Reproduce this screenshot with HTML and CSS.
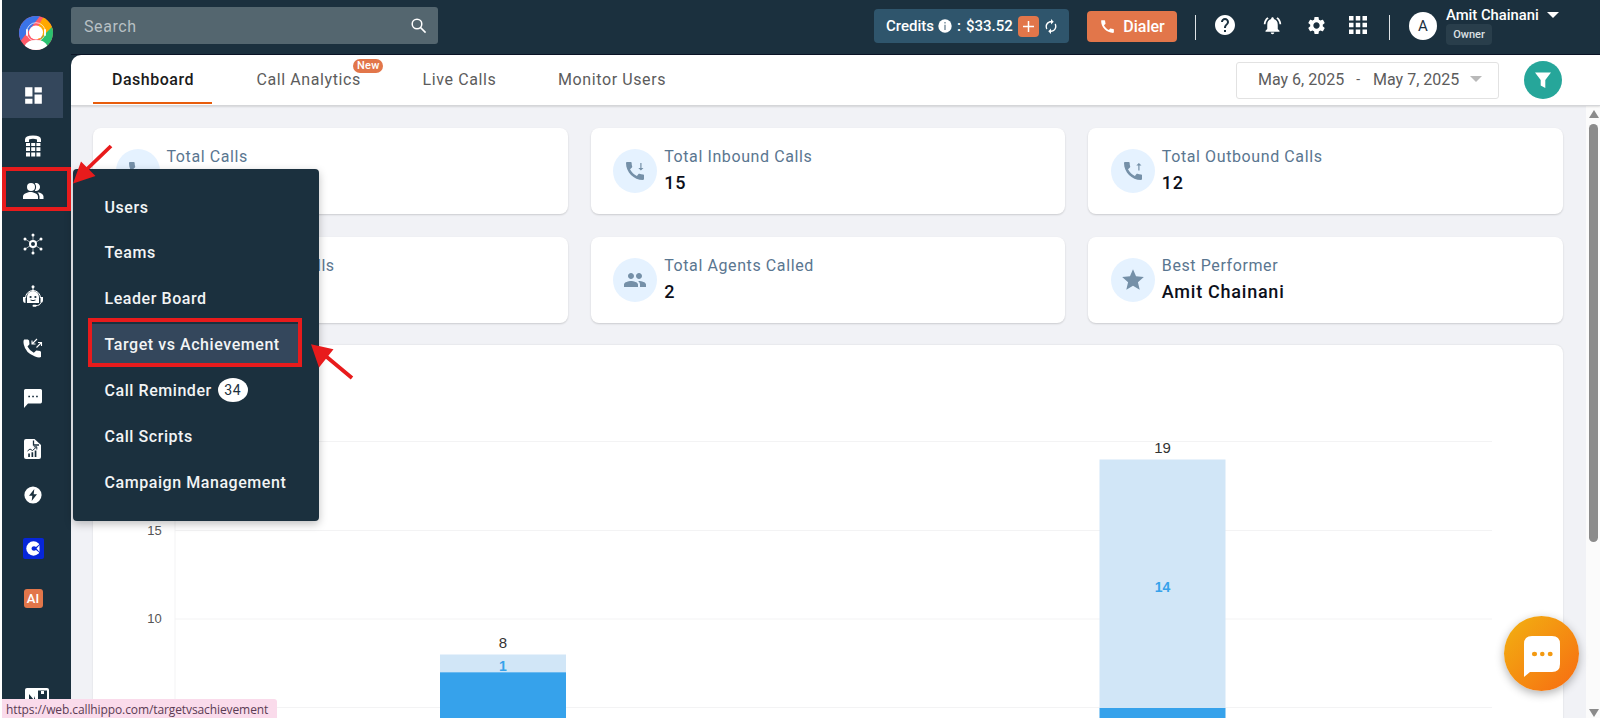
FILE: index.html
```html
<!DOCTYPE html>
<html lang="en">
<head>
    <meta charset="UTF-8">
    <meta name="viewport" content="width=device-width, initial-scale=1.0">
    <title>Dashboard</title>
    <link rel="stylesheet" href="styles.css">
</head>
<body>
    <nav class="sidebar">
        <div class="logo">
            <svg width="34" height="34" viewBox="0 0 34 34">
                <clipPath id="logoClip"><circle cx="17" cy="17" r="17"/></clipPath>
                <g clip-path="url(#logoClip)">
                    <rect width="34" height="34" fill="#ff5a68"/>
                    <path d="M0 0h21L0 27z" fill="#3b74e8"/>
                    <path d="M25 0L34 10V14L25 22L17 14z" fill="#ffa800"/>
                    <path d="M34 10V34H22V22z" fill="#2ac16f"/>
                    <path d="M5 34c0-7 5-10 12-10s12 3 12 10z" fill="#fff"/>
                </g>
                <circle cx="17" cy="16" r="9.300" fill="none" stroke="#fff" stroke-width=".7"/>
                <circle cx="17" cy="16.500" r="7" fill="#fff"/>
                <path d="M8 14v5M26 14v5" stroke="#fff" stroke-width="1.800" stroke-linecap="round"/>
                <path d="M25 20q-2 3-6 3" fill="none" stroke="#ffa800" stroke-width=".8"/>
            </svg>
        </div>
        <a class="nav-item active">
            <svg width="25" height="25" viewBox="0 0 24 24"><path d="M4 4h7v9H4zM13 4h7v5h-7zM4 15h7v5H4zM13 11h7v9h-7z"/></svg>
        </a>
        <a class="nav-item">
            <svg width="18" height="22" viewBox="0 0 18 22"><path d="M1 7V4.500Q1 0.500 9 .5T17 4.500V7H13V4.500Q9 2.800 5 4.500V7z"/><path d="M2 8h4v3H2zM7.200 8h4v3h-4zM12.400 8h4v3h-4zM2 12.200h4v3.800H2zM7.200 12.200h4v3.800h-4zM12.400 12.200h4v3.800h-4zM2 17.500h4v4H2zM7.200 17.500h4v4h-4zM12.400 17.500h4v4h-4z"/></svg>
        </a>
        <a class="nav-item">
            <svg width="21" height="16" viewBox="0 0 21 16"><circle cx="8" cy="4" r="4"/><path d="M0 16v-2.500C0 10.500 5 9 7.500 9s7.500 1.500 7.500 4.500V16zM11.800.2A4 4 0 1 1 11.800 7.800Q14.500 4 11.800.2zM14.500 9.300c3.500.5 6 1.900 6 4.200V16h-4v-2.500q0-2.300-2-4.200z"/></svg>
        </a>
        <a class="nav-item">
            <svg width="22" height="22" viewBox="0 0 22 22"><g stroke="#fff" stroke-width=".6"><path d="M11 2v18M3 6l16 10M3 16l16-10"/></g><circle cx="11" cy="11" r="3" fill="#1b303e" stroke="#fff" stroke-width="2"/><circle cx="11" cy="2" r="1.500"/><circle cx="11" cy="20" r="1.500"/><circle cx="3" cy="6" r="1.500"/><circle cx="19" cy="6" r="1.500"/><circle cx="3" cy="16" r="1.500"/><circle cx="19" cy="16" r="1.500"/></svg>
        </a>
        <a class="nav-item">
            <svg width="20" height="22" viewBox="0 0 20 22"><circle cx="10" cy="1.800" r="1.500"/><path d="M9.500 2h1v4h-1z"/><path d="M4 18v-6a6 6 0 0 1 12 0v6z"/><path d="M2.500 13a7.500 7.500 0 0 1 15 0" fill="none" stroke="#fff"/><path d="M0 12h2.500v6Q0 18 0 15zM20 12h-2.500v6Q20 18 20 15z"/><path d="M17.500 18q0 2.500-5.500 2.700" fill="none" stroke="#fff"/><rect x="9.500" y="19.700" width="4" height="2" rx="1"/><circle cx="7.600" cy="12" r="1.100" fill="#1b303e"/><circle cx="12.400" cy="12" r="1.100" fill="#1b303e"/><path d="M7.500 15q2.500 1.300 5 0" fill="none" stroke="#1b303e"/></svg>
        </a>
        <a class="nav-item">
            <svg width="20" height="20" viewBox="0 0 20 20"><path d="M1.200 1.500h3.600l1.300.9.400 3.800-2 2.300q2 4 6.300 6.200l2.500-2.300 3.900.6.800 1v5Q16 20 12 18.500 2.500 15 .8 6.500 0 2.500 1.200 1.500z"/><path d="M14 1L9 6M9 2.500V6h3.500M13.500 9.500l5-5M15 4.500h3.500V8" fill="none" stroke="#fff" stroke-width="1.100"/></svg>
        </a>
        <a class="nav-item">
            <svg width="18" height="19" viewBox="0 0 18 19"><path d="M1.500 0h15Q18 0 18 1.500v11Q18 14.500 16.500 14.500H4L0 19V1.500Q0 0 1.500 0z"/><path d="M4.300 6.800h1.700v1.500H4.300zM8.200 6.800h1.700v1.500H8.200zM12.100 6.800h1.700v1.500h-1.700z" fill="#1b303e"/></svg>
        </a>
        <a class="nav-item report">
            <svg width="17" height="20" viewBox="0 0 17 20"><path d="M2 0h8.500L17 6v12q0 2-2 2H2q-2 0-2-2V2Q0 0 2 0z"/><path d="M9.500 1.500V6H15" fill="none" stroke="#1b303e" stroke-width="1.300"/><path d="M4.200 14.500h1.700v3.500H4.200zM7.500 13.200h1.700V18H7.500zM10.700 11.500h1.700V18h-1.700z" fill="#1b303e"/><path d="M3.500 12l2.500-2 2.500 1.500L12.500 8M9.800 7.800h3v2.700" fill="none" stroke="#1b303e" stroke-width="1"/></svg>
        </a>
        <a class="nav-item report">
            <svg width="18" height="18" viewBox="0 0 18 18"><circle cx="9" cy="9" r="8.600"/><path d="M10.300 3L5 9.800h3.300L7.700 15 13 8.200H9.700z" fill="#1b303e"/></svg>
        </a>
        <a class="nav-item">
            <svg width="21" height="21" viewBox="0 0 21 21"><rect width="21" height="21" rx="2" fill="#0726d9"/><circle cx="10.500" cy="10.500" r="7.200"/><path d="M18.500 4.500L13 9Q11 7.500 9 9 8 10.500 9 12q2 1.500 4 0l5.500 4.500z" fill="#0726d9"/><path d="M16.500 7l-3 3.500 3 3.500z"/></svg>
        </a>
        <a class="nav-item"><span class="ai">AI</span></a>
        <a class="nav-item wallet">
            <svg width="24" height="20" viewBox="0 0 24 20"><rect width="24" height="20" rx="2"/><path d="M13 2.500h9V18h-9zM4 6l5 6V8l2 5H4z" fill="#1b303e"/><path d="M16 3h3v3h-3z"/></svg>
        </a>
    </nav>

    <div class="page">
        <header class="topbar">
            <div class="search">
                <span>Search</span>
                <svg width="16" height="16" viewBox="0 0 16 16" fill="none" stroke="#fff" stroke-width="1.500"><circle cx="6" cy="6" r="4.800"/><path d="M9.600 9.600l5 5"/></svg>
            </div>
            <div class="credits">
                <span>Credits</span>
                <svg width="14" height="14" viewBox="0 0 14 14"><circle cx="7" cy="7" r="6.700" fill="#fff"/><path d="M6.200 3h1.600v1.500H6.200zM6.200 5.700h1.600V11H6.200z" fill="#8598a5"/></svg>
                <span>:</span>
                <span class="amount">$33.52</span>
                <span class="plus"><svg width="11" height="11" viewBox="0 0 11 11" stroke="#fff" stroke-width="1.500"><path d="M5.500 0v11M0 5.500h11"/></svg></span>
                <svg class="refresh" width="12" height="15" viewBox="4 1 16 22" fill="#fff"><path d="M12 6v3l4-4-4-4v3c-4.420 0-8 3.580-8 8 0 1.570.460 3.030 1.240 4.260L6.700 14.800c-.45-.83-.7-1.790-.7-2.800 0-3.310 2.690-6 6-6zm6.760 1.740L17.300 9.200c.44.840.7 1.790.7 2.800 0 3.310-2.690 6-6 6v-3l-4 4 4 4v-3c4.420 0 8-3.580 8-8 0-1.570-.46-3.030-1.240-4.260z"/></svg>
            </div>
            <button class="dialer">
                <svg width="17" height="17" viewBox="0 0 24 24" fill="#fff"><path d="M20.010 15.380c-1.230 0-2.420-.2-3.530-.56-.35-.12-.74-.03-1.010.24l-1.570 1.970c-2.830-1.350-5.480-3.900-6.890-6.830l1.950-1.660c.27-.28.350-.67.240-1.020-.37-1.110-.56-2.300-.56-3.530 0-.54-.45-.99-.99-.99H4.190C3.650 3 3 3.240 3 3.990 3 13.280 10.730 21 20.010 21c.71 0 .99-.63.990-1.180v-3.450c0-.54-.45-.99-.99-.99z"/></svg>
                Dialer
            </button>
            <i class="divider"></i>
            <div class="tools">
                <svg width="24" height="24" viewBox="0 0 24 24"><path d="M12 2C6.480 2 2 6.480 2 12s4.480 10 10 10 10-4.480 10-10S17.520 2 12 2zm1 17h-2v-2h2v2zm2.070-7.750l-.9.920C13.450 12.900 13 13.500 13 15h-2v-.5c0-1.100.450-2.100 1.170-2.830l1.240-1.260c.37-.36.590-.86.590-1.410 0-1.100-.9-2-2-2s-2 .9-2 2H8c0-2.210 1.790-4 4-4s4 1.790 4 4c0 .88-.36 1.680-.93 2.250z"/></svg>
                <svg width="21" height="21" viewBox="0 0 24 24"><path d="M7.580 4.080L6.150 2.650C3.750 4.480 2.170 7.300 2.030 10.500h2c.15-2.650 1.510-4.970 3.550-6.420zm12.390 6.420h2c-.15-3.200-1.730-6.020-4.120-7.850l-1.420 1.430c2.020 1.450 3.390 3.770 3.540 6.420zM18 11c0-3.070-1.640-5.640-4.500-6.320V4c0-.83-.67-1.500-1.500-1.500s-1.500.67-1.500 1.500v.68C7.630 5.360 6 7.920 6 11v5l-2 2v1h16v-1l-2-2v-5zm-6 11c1.100 0 2-.8 2-2h-4c0 1.200.9 2 2 2z"/></svg>
                <svg width="21" height="21" viewBox="0 0 24 24"><path d="M19.140 12.940c.04-.3.060-.61.060-.94 0-.32-.02-.64-.07-.94l2.030-1.580c.18-.14.230-.41.120-.61l-1.920-3.320c-.12-.22-.37-.29-.59-.22l-2.390.96c-.5-.38-1.030-.7-1.620-.94l-.36-2.540c-.04-.24-.24-.41-.48-.41h-3.840c-.24 0-.43.170-.47.410l-.36 2.540c-.59.240-1.130.570-1.620.94l-2.390-.96c-.22-.08-.47 0-.59.220L2.740 8.870c-.12.210-.08.470.12.610l2.030 1.580c-.05.300-.09.630-.09.940s.02.640.07.940l-2.030 1.580c-.18.140-.23.410-.12.610l1.920 3.320c.12.220.370.290.590.220l2.390-.96c.5.380 1.030.7 1.620.94l.36 2.540c.05.240.240.410.480.410h3.840c.24 0 .44-.17.470-.41l.36-2.540c.59-.24 1.130-.56 1.620-.94l2.390.96c.22.080.470 0 .59-.22l1.920-3.320c.12-.22.070-.47-.12-.61l-2.010-1.580zM12 15.600c-1.980 0-3.600-1.620-3.600-3.600s1.620-3.600 3.600-3.600 3.600 1.620 3.600 3.600-1.620 3.600-3.600 3.600z"/></svg>
                <svg width="18" height="18" viewBox="0 0 18 18"><path d="M0 0h4.500v4.500H0zM6.750 0h4.500v4.500h-4.500zM13.500 0H18v4.500h-4.500zM0 6.750h4.500v4.500H0zM6.750 6.750h4.500v4.500h-4.500zM13.500 6.750H18v4.500h-4.500zM0 13.500h4.500V18H0zM6.750 13.500h4.500V18h-4.500zM13.500 13.500H18V18h-4.500z"/></svg>
            </div>
            <i class="divider"></i>
            <div class="avatar">A</div>
            <div class="account">
                <div class="account-name">Amit Chainani <i class="caret"></i></div>
                <span class="role">Owner</span>
            </div>
        </header>

        <div class="tabs">
            <a class="tab selected">Dashboard</a>
            <a class="tab">Call Analytics<span class="new">New</span></a>
            <a class="tab">Live Calls</a>
            <a class="tab">Monitor Users</a>
            <div class="dates">
                <span>May 6, 2025</span>
                <span class="dash">-</span>
                <span>May 7, 2025</span>
                <i class="caret grey"></i>
            </div>
            <button class="filter">
                <svg width="16" height="16" viewBox="0 0 16 16"><path d="M0 .5h16L10.300 8v8L5.700 13.500V8z" fill="#fff"/></svg>
            </button>
        </div>

        <div class="body">
            <main class="content">
                <section class="cards">
                    <div class="card">
                        <span class="card-icon"><svg width="24" height="24" viewBox="0 0 24 24"><use href="#phone"/></svg></span>
                        <div><p class="label">Total Calls</p></div>
                    </div>
                    <div class="card">
                        <span class="card-icon"><svg width="24" height="24" viewBox="0 0 24 24">
                            <path id="phone" d="M20.010 15.380c-1.230 0-2.420-.2-3.530-.56-.35-.12-.74-.03-1.010.24l-1.570 1.970c-2.830-1.350-5.480-3.900-6.890-6.830l1.950-1.660c.27-.28.350-.67.240-1.020-.37-1.110-.56-2.300-.56-3.530 0-.54-.45-.99-.99-.99H4.190C3.650 3 3 3.240 3 3.990 3 13.280 10.730 21 20.010 21c.71 0 .99-.63.990-1.180v-3.450c0-.54-.45-.99-.99-.99z"/>
                            <path d="M17.300 4h1.200v5h2l-2.600 2.600L15.300 9h2z"/></svg></span>
                        <div><p class="label">Total Inbound Calls</p><p class="value">15</p></div>
                    </div>
                    <div class="card">
                        <span class="card-icon"><svg width="24" height="24" viewBox="0 0 24 24"><use href="#phone"/><path d="M17.300 11.500h1.200v-5h2l-2.600-2.600-2.600 2.600h2z"/></svg></span>
                        <div><p class="label">Total Outbound Calls</p><p class="value">12</p></div>
                    </div>
                    <div class="card">
                        <span class="card-icon"><svg width="24" height="24" viewBox="0 0 24 24"><use href="#phone"/></svg></span>
                        <div><p class="label">Total Connected Calls</p></div>
                    </div>
                    <div class="card">
                        <span class="card-icon"><svg width="24" height="24" viewBox="0 0 24 24"><path d="M16 11c1.660 0 2.990-1.340 2.990-3S17.660 5 16 5c-1.660 0-3 1.340-3 3s1.340 3 3 3zm-8 0c1.660 0 2.990-1.340 2.990-3S9.660 5 8 5C6.340 5 5 6.340 5 8s1.340 3 3 3zm0 2c-2.330 0-7 1.170-7 3.500V19h14v-2.500c0-2.330-4.670-3.500-7-3.500zm8 0c-.29 0-.62.020-.97.050 1.160.84 1.970 1.970 1.970 3.450V19h6v-2.500c0-2.330-4.670-3.500-7-3.500z"/></svg></span>
                        <div><p class="label">Total Agents Called</p><p class="value">2</p></div>
                    </div>
                    <div class="card">
                        <span class="card-icon"><svg width="26" height="26" viewBox="0 0 24 24"><path d="M12 17.270L18.180 21l-1.640-7.030L22 9.240l-7.190-.61L12 2 9.190 8.630 2 9.240l5.460 4.730L5.820 21z"/></svg></span>
                        <div><p class="label">Best Performer</p><p class="value">Amit Chainani</p></div>
                    </div>
                </section>

                <section class="panel">
                    <svg class="chart" width="1470" height="373" viewBox="93 345 1470 373">
                        <path class="grid" d="M175 441.500H1492M175 530.500H1492M175 619H1492M175 707.500H1492M175 441V718"/>
                        <g class="axis">
                            <text x="154.500" y="535">15</text>
                            <text x="154.500" y="623">10</text>
                        </g>
                        <rect class="light" x="440" y="654.500" width="126" height="18"/>
                        <rect class="dark" x="440" y="672.300" width="126" height="46"/>
                        <rect class="light" x="1099.500" y="459.500" width="126" height="249"/>
                        <rect class="dark" x="1099.500" y="708" width="126" height="10"/>
                        <text class="total" x="503" y="648">8</text>
                        <text class="total" x="1162.500" y="453">19</text>
                        <text class="part" x="503" y="671">1</text>
                        <text class="part" x="1162.500" y="591.500">14</text>
                    </svg>
                </section>
            </main>
            <div class="scrollbar">
                <i class="up"></i>
                <i class="thumb"></i>
                <i class="down"></i>
            </div>
        </div>
    </div>

    <div class="submenu">
        <a>Users</a>
        <a>Teams</a>
        <a>Leader Board</a>
        <a class="hovered">Target vs Achievement</a>
        <a>Call Reminder <span class="count">34</span></a>
        <a>Call Scripts</a>
        <a>Campaign Management</a>
    </div>

    <!-- highlights and arrows -->
    <div class="mark mark-users"></div>
    <div class="mark mark-target"></div>
    <svg class="arrows" width="400" height="400" viewBox="0 0 400 400">
        <path d="M111 146L84 172M352 378L325 355.500" stroke="#e81b1c" stroke-width="3.800"/>
        <path d="M73 183.500L81 161.500 95.500 176zM311 344.300L333.500 349.300 319 367.500z" fill="#e81b1c"/>
    </svg>

    <div class="status">https://web.callhippo.com/targetvsachievement</div>

    <div class="chat">
        <svg width="36" height="41" viewBox="0 0 36 41"><path d="M8 0h20q8 0 8 8v20q0 8-8 8H6L0 41V8Q0 0 8 0z" fill="#fff"/><g fill="#f39a12"><ellipse cx="10.500" cy="18" rx="2.600" ry="2.200"/><ellipse cx="18.300" cy="18" rx="2.300" ry="2.200"/><ellipse cx="26.200" cy="18" rx="2.500" ry="2.200"/></g></svg>
    </div>
</body>
</html>
```
FILE: styles.css
```css
* {
    box-sizing: border-box;
}

body {
    margin: 0;
    width: 1600px;
    height: 718px;
    overflow: hidden;
    display: flex;
    padding-left: 2px;
    background-color: #fff;
    font-family: Roboto, sans-serif;
    font-size: 16px;
}

/* sidebar */
.sidebar {
    width: 69px;
    flex: none;
    display: grid;
    grid-template-rows: 72px 46px 55px 36px 69px 36px 67px 34px 68px 24px 82px 19px 110px;
    background-color: #1b303e;
}

.logo {
    padding: 16px 0 0 17px;
}

.nav-item {
    display: flex;
    align-items: center;
    justify-content: center;
    width: 62px;
    min-height: 0;
    fill: #fff;
}

.nav-item svg {
    flex: none;
}

.nav-item.active {
    width: 61px;
    padding-left: 1px;
    background-color: #34475c;
}

.report {
    width: 61px;
}

.wallet {
    align-items: flex-start;
    width: 69px;
    padding-top: 80px;
}

.ai {
    flex: none;
    width: 19px;
    height: 19px;
    line-height: 19px;
    border-radius: 3px;
    background-color: #e2764a;
    color: #fff;
    font-size: 13px;
    font-weight: 500;
    text-align: center;
}

/* top bar */
.page {
    flex: 1;
    display: flex;
    flex-direction: column;
    background-color: #1b303e;
}

.topbar {
    flex: none;
    height: 55px;
    display: flex;
    align-items: flex-start;
    border-bottom: 1px solid #0b1426;
    color: #fff;
}

.search {
    width: 367px;
    height: 37px;
    margin-top: 7px;
    padding: 1px 11px 0 13px;
    display: flex;
    align-items: center;
    justify-content: space-between;
    border-radius: 3px;
    background-color: #54666f;
    color: #b8c0c4;
    letter-spacing: 0.6px;
}

.credits {
    width: 195px;
    height: 34px;
    margin: 9px 18px 0 436px;
    padding-left: 12px;
    display: flex;
    align-items: center;
    border-radius: 4px;
    background-color: #2f556c;
    font-size: 15px;
    font-weight: 500;
}

.credits svg {
    margin: 0 5px 0 4px;
}

.amount {
    margin-left: 5px;
}

.plus {
    width: 21px;
    height: 21px;
    margin: 0 3px 0 5px;
    display: flex;
    align-items: center;
    justify-content: center;
    border-radius: 4px;
    background-color: #e2764a;
}

.plus svg,
.credits .refresh {
    margin: 0;
}

.credits .refresh {
    margin-left: 3px;
}

.dialer {
    width: 90px;
    height: 31px;
    margin: 11px 18px 0 0;
    padding: 0;
    display: flex;
    align-items: center;
    justify-content: center;
    gap: 7px;
    border: none;
    border-radius: 4px;
    background-color: #e2764a;
    color: #fff;
    font: 500 16px Roboto, sans-serif;
}

.divider {
    width: 1px;
    height: 25px;
    margin-top: 15px;
    background-color: #dfe3e6;
}

.tools {
    height: 24px;
    margin: 13px 22px 0 17px;
    display: flex;
    align-items: center;
    fill: #fff;
}

.tools svg:nth-child(2) {
    margin: 0 23px 0 24.500px;
}

.tools svg:nth-child(4) {
    margin-left: 22.500px;
}

.avatar {
    width: 28px;
    height: 28px;
    margin: 12px 9px 0 19px;
    line-height: 28px;
    border-radius: 50%;
    background-color: #fff;
    color: #1b303e;
    font-size: 15px;
    text-align: center;
}

.account-name {
    display: flex;
    align-items: center;
    margin-top: 6px;
    height: 18px;
    font-size: 14.800px;
    font-weight: 500;
}

.caret {
    margin-left: 8px;
    border: 6px solid transparent;
    border-top-color: #fff;
    border-bottom: none;
}

.caret.grey {
    margin-left: 11px;
    border-top-color: #b9b9b9;
}

.role {
    display: block;
    width: 46px;
    height: 21px;
    line-height: 21px;
    border-radius: 4px;
    background-color: #293e4b;
    font-size: 11px;
    font-weight: 500;
    text-align: center;
    color: #dde1e4;
}

/* tabs */
.tabs {
    flex: none;
    height: 51px;
    padding: 0 38px 0 22px;
    display: flex;
    align-items: center;
    border-radius: 10px 0 0 0;
    border-bottom: 1px solid #d5d6d9;
    box-shadow: 0 1px 2px rgba(0, 0, 0, 0.12);
    background-color: #fff;
    position: relative;
    letter-spacing: 0.6px;
    color: #5c5c5c;
}

.tab {
    position: relative;
    height: 49px;
    padding: 0 18.500px;
    margin: -1px 24.700px 0 0;
    line-height: 49px;
}

.tab.selected {
    margin-right: 25.500px;
    padding: 0 18.500px 0 19px;
    color: #1b1b1b;
    font-weight: 500;
    letter-spacing: 0.5px;
    border-bottom: 2.500px solid #e85d0c;
}

.new {
    position: absolute;
    top: 4px;
    right: -4px;
    width: 30px;
    height: 14px;
    line-height: 14px;
    border-radius: 7px;
    background-color: #e2764a;
    color: #fff;
    font-size: 11px;
    font-weight: 500;
    letter-spacing: 0.3px;
    text-align: center;
}

.dates {
    width: 263px;
    height: 37px;
    margin-left: auto;
    padding: 0 0 2px 21px;
    display: flex;
    align-items: center;
    border: 1px solid #e2e2e2;
    border-radius: 3px;
    letter-spacing: 0;
}

.dash {
    margin: 0 13px 0 12px;
    font-size: 14px;
}

.filter {
    width: 38px;
    height: 38px;
    margin-left: 25px;
    padding: 0;
    display: flex;
    align-items: center;
    justify-content: center;
    border: none;
    border-radius: 50%;
    background-color: #26a69a;
}

/* content */
.body {
    flex: 1;
    min-height: 0;
    display: flex;
    background-color: #f1f2f6;
}

.content {
    flex: 1;
    padding: 22px 23px 0 22px;
}

.cards {
    display: grid;
    grid-template-columns: repeat(3, 1fr);
    gap: 23px;
}

.card {
    height: 86px;
    padding: 21px 22.500px;
    display: flex;
    gap: 7px;
    border-radius: 8px;
    background-color: #fff;
    box-shadow: 0 1px 2px rgba(0, 0, 0, 0.16);
}

.card-icon {
    width: 44px;
    height: 44px;
    display: flex;
    align-items: center;
    justify-content: center;
    border-radius: 50%;
    background-color: #e5f2ff;
    fill: #7590a8;
}

.label {
    margin: -2px 0 4px;
    line-height: 20px;
    letter-spacing: 0.6px;
    color: #5a7690;
}

.value {
    margin: 0;
    line-height: 24px;
    font-size: 18px;
    font-weight: 500;
    letter-spacing: 0.75px;
    color: #0c0f1a;
}

.panel {
    height: 400px;
    margin-top: 22px;
    border-radius: 8px;
    background-color: #fff;
    box-shadow: 0 0 2px rgba(0, 0, 0, 0.12);
}

.chart {
    display: block;
    font-family: "Liberation Sans", sans-serif;
    text-anchor: middle;
}

.grid {
    fill: none;
    stroke: #f3f3f4;
}

.axis {
    font-size: 13px;
    fill: #555;
}

.light {
    fill: #d1e6f7;
}

.dark {
    fill: #36a2eb;
}

.total {
    font-size: 15px;
    fill: #333;
}

.part {
    font-size: 14px;
    font-weight: bold;
    fill: #36a2eb;
}

/* scrollbar */
.scrollbar {
    width: 14px;
    padding: 4px 0 1px 1px;
    display: flex;
    flex-direction: column;
    align-items: center;
    background-color: #fbfbfb;
}

.up,
.down {
    border: 5px solid transparent;
}

.up {
    border-top: none;
    border-bottom: 8px solid #8b8b8b;
}

.thumb {
    width: 9px;
    height: 418px;
    margin-top: 6px;
    border-radius: 5px;
    background-color: #8b8b8b;
}

.down {
    margin-top: auto;
    border-bottom: none;
    border-top: 8px solid #8b8b8b;
}

/* users submenu */
.submenu {
    position: absolute;
    left: 73px;
    top: 168.500px;
    width: 246px;
    height: 352px;
    padding: 17.500px 17px 0 19px;
    display: flex;
    flex-direction: column;
    gap: 3.850px;
    border-radius: 4px;
    background-color: #1b303e;
    box-shadow: 0 3px 8px rgba(0, 0, 0, 0.25);
    color: #f2f4f5;
    font-weight: 500;
    letter-spacing: 0.56px;
}

.submenu a {
    flex: none;
    height: 42px;
    padding-left: 12.500px;
    display: flex;
    align-items: center;
    white-space: nowrap;
}

.submenu .hovered {
    background-color: #34475c;
}

.count {
    width: 30px;
    height: 24px;
    margin-left: 6px;
    line-height: 24px;
    border-radius: 50%;
    background-color: #fff;
    color: #1b303e;
    font-size: 14px;
    font-weight: 400;
    text-align: center;
}

.mark {
    position: absolute;
    border: 4px solid #e81b1c;
}

.mark-users {
    left: 2px;
    top: 167px;
    width: 69px;
    height: 44px;
}

.mark-target {
    left: 88px;
    top: 318px;
    width: 214px;
    height: 49px;
}

.arrows {
    position: absolute;
    left: 0;
    top: 0;
}

.status {
    position: absolute;
    left: 2px;
    bottom: 0;
    width: 275px;
    height: 19px;
    padding-left: 4px;
    line-height: 22px;
    border-radius: 0 3px 0 0;
    background-color: #fadbeb;
    color: #5a3c54;
    font-family: "Open Sans", sans-serif;
    font-size: 12px;
    letter-spacing: -0.1px;
    white-space: nowrap;
}

.chat {
    position: absolute;
    left: 1504px;
    top: 616px;
    width: 75px;
    height: 75px;
    padding: 20px 0 0 20px;
    border-radius: 50%;
    background: linear-gradient(135deg, #f2b211, #f76b12);
    box-shadow: 0 3px 10px rgba(0, 0, 0, 0.3);
}
```
